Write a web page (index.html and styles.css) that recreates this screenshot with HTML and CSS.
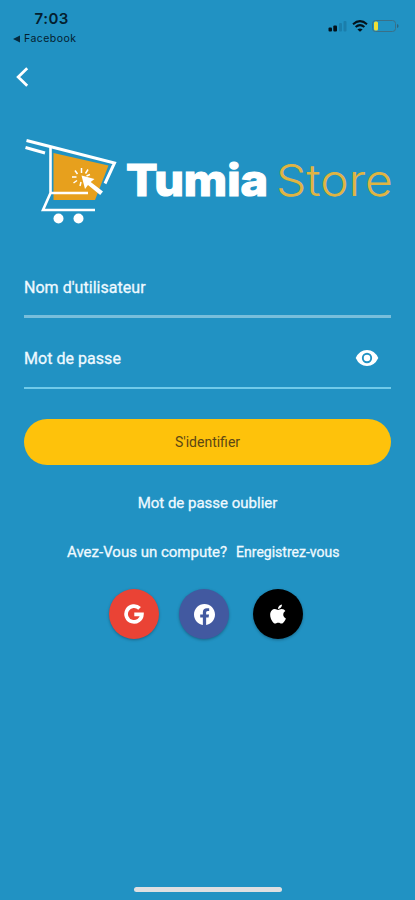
FILE: index.html
```html
<!DOCTYPE html>
<html lang="fr">
<head>
    <meta charset="UTF-8">
    <meta name="viewport" content="width=device-width, initial-scale=1.0">
    <title>Tumia Store</title>
    <link rel="stylesheet" href="styles.css">
</head>
<body>

    <div class="statusbar">
        <div class="status-left">
            <span class="time">7:03</span>
            <span class="back-app"><svg width="8" height="8" viewBox="0 0 8 8"><path d="M0 4L7 .5v7z" fill="#062a3e"/></svg>Facebook</span>
        </div>
        <div class="status-icons">
            <svg width="20" height="12" viewBox="0 0 20 12">
                <rect x="0.5" y="7.5" width="3.5" height="4" rx="1" fill="#04121b"/>
                <rect x="5.3" y="5.5" width="3.7" height="6" rx="1" fill="#04121b"/>
                <rect x="11" y="3" width="3" height="8.5" rx="1" fill="#1b7eab"/>
                <rect x="15.5" y="1" width="3" height="10.5" rx="1" fill="#1b7eab"/>
            </svg>
            <svg width="16" height="12" viewBox="0 0 16 12" fill="none" stroke="#04121b" stroke-width="2">
                <path d="M1 4.2Q8-2 15 4.2M3.6 7.1Q8 3.2 12.4 7.1"/>
                <path d="M8 11.8L5.4 9.4Q8 7.4 10.6 9.4z" fill="#04121b" stroke="none"/>
            </svg>
            <svg width="27" height="14" viewBox="0 0 27 14">
                <rect x="0.5" y="1.5" width="23" height="11" rx="3" fill="none" stroke="#3a7088"/>
                <rect x="2" y="2.5" width="4" height="9" rx="1.5" fill="#f1df35"/>
                <path d="M25 5v4q1.6-.6 1.6-2T25 5z" fill="#2c6480"/>
            </svg>
        </div>
    </div>

    <a class="back" href="#" aria-label="Retour">
        <svg width="14" height="22" viewBox="0 0 14 22"><path d="M12.200 2.300L3.200 11l9 8.700" fill="none" stroke="#fff" stroke-width="2.800"/></svg>
    </a>

    <div class="logo">
        <svg class="cart" width="96" height="88" viewBox="0 0 96 88" fill="none" stroke="#fff">
            <path d="M29.500 16L84.500 28.500 71 63H29.500z" fill="#e7a01d" stroke="none"/>
            <path d="M2.500 3.500L90.500 26 81 46.500M1.500 10.500L21 16" stroke-width="3"/>
            <path d="M26.500 10.500V56H64M26.500 56L19 73H71" stroke-width="2.600"/>
            <circle cx="34.500" cy="81.500" r="5" fill="#fff" stroke="none"/>
            <circle cx="54.500" cy="81.500" r="5" fill="#fff" stroke="none"/>
            <path d="M57.500 38.500L70.500 42l-3.800 3 12.300 9.500-2.800 3.500L64 48 61 52z" fill="#fff" stroke="none"/>
            <path d="M57.500 36V31M61.500 36.500L64 32.500M53.500 37L51 33.500M52.500 40H48M53 43.500L49.500 46M57 45L56 49M62.500 39L66 37.500" stroke-width="1.500"/>
        </svg>
        <span class="brand">Tumia</span><span class="brand-light">Store</span>
    </div>

    <form class="login" onsubmit="return false">
        <label class="field"><span>Nom d'utilisateur</span></label>
        <label class="field password">
            <span>Mot de passe</span>
            <svg width="24" height="18" viewBox="0 0 24 18">
                <path d="M.7 9Q4.500 1 12 1t11.300 8Q19.500 17 12 17T.7 9z" fill="#fff"/>
                <circle cx="12" cy="9" r="4.200" fill="#fff" stroke="#2192c3" stroke-width="1.900"/>
            </svg>
        </label>
        <button class="submit">S'identifier</button>
    </form>

    <a class="forgot" href="#">Mot de passe oublier</a>
    <div class="register"><span>Avez-Vous un compute?</span><a href="#">Enregistrez-vous</a></div>

    <div class="social">
        <a class="google" href="#" aria-label="Google">
            <svg width="20" height="20" viewBox="0 0 20 20"><path d="M15.600 4.400A7.900 7.900 0 1 0 17.900 10.300H10.300" fill="none" stroke="#fff" stroke-width="3.700"/></svg>
        </a>
        <a class="facebook" href="#" aria-label="Facebook">
            <svg width="21" height="21" viewBox="0 0 24 24"><path fill="#fff" d="M24 12.070C24 5.400 18.630 0 12 0S0 5.400 0 12.070C0 18.100 4.390 23.090 10.130 24v-8.440H7.080v-3.490h3.050V9.410c0-3.020 1.790-4.690 4.530-4.690 1.310 0 2.680.24 2.680.24v2.970h-1.510c-1.490 0-1.960.93-1.960 1.890v2.250h3.330l-.53 3.490h-2.800V24C19.610 23.090 24 18.100 24 12.070z"/></svg>
        </a>
        <a class="apple" href="#" aria-label="Apple">
            <svg width="16" height="20" viewBox="0 20 384 472" preserveAspectRatio="none"><path fill="#fff" d="M318.700 268.700c-.2-36.700 16.400-64.400 50-84.800-18.800-26.900-47.200-41.700-84.700-44.600-35.500-2.800-74.300 20.700-88.500 20.700-15 0-49.400-19.700-76.400-19.700C63.300 141.200 4 184.800 4 273.500q0 39.300 14.400 81.200c12.800 36.700 59 126.700 107.200 125.200 25.200-.6 43-17.900 75.800-17.900 31.800 0 48.300 17.900 76.400 17.900 48.600-.7 90.400-82.500 102.600-119.300-65.200-30.700-61.700-90-61.700-91.900zm-56.600-164.200c27.300-32.400 24.800-61.900 24-72.500-24.100 1.400-52 16.400-67.900 34.900-17.500 19.800-27.800 44.300-25.600 71.900 26.100 2 49.900-11.400 69.500-34.300z"/></svg>
        </a>
    </div>

    <div class="home-bar"></div>

</body>
</html>
```
FILE: styles.css
```css
* { box-sizing: border-box; }
body { margin: 0; height: 900px; display: flex; flex-direction: column; background: #2192c3; color: #eef9ff; font-family: Roboto, sans-serif; overflow: hidden; }
a { color: inherit; text-decoration: none; }
svg { display: block; flex: none; }

.statusbar { height: 50px; padding: 10px 16px 0 13px; display: flex; justify-content: space-between; color: #04202f; font-family: Inter, sans-serif; }
.status-left { display: flex; flex-direction: column; }
.time { padding-left: 21.500px; font-size: 15px; line-height: 18px; font-weight: 600; letter-spacing: .5px; }
.back-app { display: flex; align-items: center; gap: 3px; font-size: 10.500px; line-height: 21px; letter-spacing: .45px; }
.status-icons { display: flex; align-items: center; height: 31px; gap: 4px; }

.back { height: 54px; padding: 16px 0 0 15px; }
.logo { height: 140px; padding: 33px 0 0 24px; display: flex; align-items: flex-start; }
.brand, .brand-light { font-family: Inter, sans-serif; font-size: 44px; line-height: 50px; white-space: nowrap; padding: 18px 0 0 6px; transform-origin: 6px 0; }
.brand { width: 150px; font-weight: 800; color: #fff; -webkit-text-stroke: 1.2px #fff; transform: scaleX(1.062); }
.brand-light { font-weight: 300; color: #dfb443; transform: scaleX(1.09); }

.login { padding: 12px 24px 0; }
.field { height: 62px; display: flex; border-bottom: 3px solid #78bedb; padding-top: 22px; font-size: 16px; line-height: 20px; letter-spacing: .04px; -webkit-text-stroke: .3px; }
.field.password { height: 71px; padding: 31px 12px 0 0; justify-content: space-between; border-bottom: 2px solid #70cae9; }
.submit { display: block; width: 100%; height: 46px; margin-top: 30px; border: none; border-radius: 23px; background: #fec20b; color: #5c4714; font: 14px/46px Roboto, sans-serif; padding: 0; }

.forgot { margin-top: 28px; text-align: center; font-size: 15px; line-height: 20px; -webkit-text-stroke: .3px; }
.register { margin-top: 29px; padding-left: 67px; display: flex; gap: 9px; font-size: 15px; line-height: 20px; -webkit-text-stroke: .3px; white-space: nowrap; }
.register a { font-size: 14px; }

.social { display: flex; margin: 27px 0 0 109px; }
.social a { width: 50px; height: 50px; border-radius: 50%; display: flex; align-items: center; justify-content: center; box-shadow: 0 1px 3px rgba(0,0,0,0.3); }
.google { background: #ea4335; }
.facebook { background: #4259a0; margin: 0 24px 0 20px; }
.apple { background: #000; }

.home-bar { width: 148px; height: 5px; margin: auto auto 8px 134px; border-radius: 3px; background: #dedfe1; }
```
